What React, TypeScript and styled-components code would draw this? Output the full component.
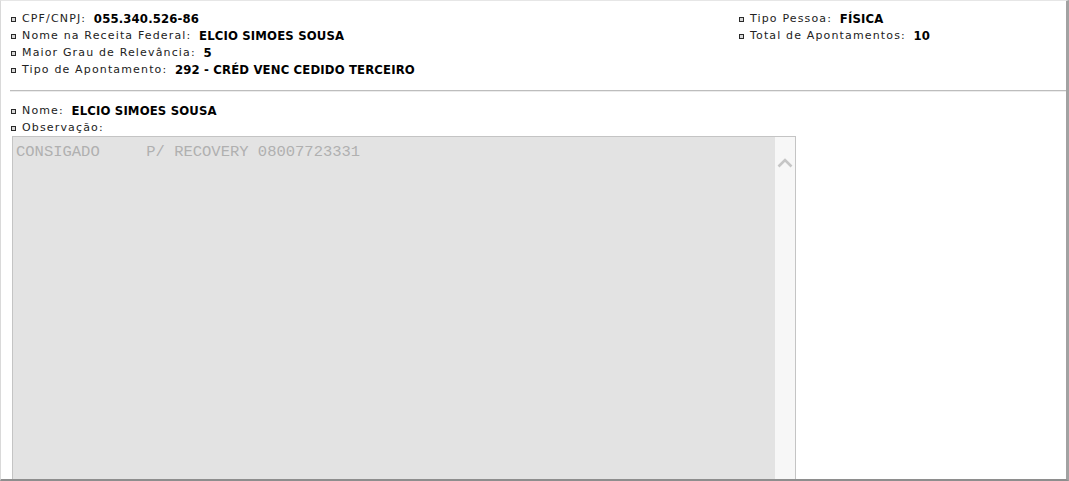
import React from "react";
import styled, { createGlobalStyle } from "styled-components";

const GlobalStyle = createGlobalStyle`
  html, body { margin: 0; padding: 0; background: #ffffff; }
  body { font-family: "DejaVu Sans", Verdana, sans-serif; }
  * { box-sizing: border-box; }
`;

const Page = styled.div`
  height: 481px;
  overflow: hidden;
  background: #ffffff;
  border-top: 1px solid #e6e6e6;
  border-left: 1px solid #d9d9d9;
  border-right: 3px solid #a2a2a2;
  border-bottom: 2px solid #8e8e8e;
`;

const Header = styled.div`
  display: grid;
  grid-template-columns: 728px 1fr;
  padding: 9px 0 0 9px;
`;

const Column = styled.div`
  display: flex;
  flex-direction: column;
`;

const Item = styled.div`
  display: flex;
  align-items: center;
  height: 17px;
  font-size: 11px;
  letter-spacing: 1.15px;
  color: #222222;
  white-space: pre;
`;

const Bullet = styled.span`
  display: inline-block;
  width: 5px;
  height: 5px;
  border: 1px solid #2a2a2a;
  background: #d8d8d8;
  margin: 1px 6px 0 1px;
  flex: none;
`;

const Value = styled.b`
  font-weight: bold;
  font-size: 11.7px;
  letter-spacing: 0.15px;
  margin-left: 3px;
  color: #000000;
`;

const Divider = styled.div`
  margin: 12px 0 0 9px;
  border-top: 1px solid #bdbdbd;
  border-bottom: 1px solid #ececec;
`;

const Body = styled.div`
  display: flex;
  flex-direction: column;
  padding: 10px 0 0 9px;
`;

const ObsBox = styled.div`
  display: flex;
  width: 784px;
  height: 420px;
  margin-left: 2px;
  border: 1px solid #c4c4c4;
`;

const ObsText = styled.div`
  flex: 1;
  background: #e3e3e3;
  padding: 6px 3px;
  font-family: "Liberation Mono", "Courier New", monospace;
  font-size: 15.5px;
  line-height: 18px;
  color: #b0b0b0;
  white-space: pre;
`;

const ScrollTrack = styled.div`
  width: 20px;
  background: #f7f7f7;
  display: flex;
  justify-content: center;
  padding-top: 21px;
`;

const Row: React.FC<{ label: string; value: string }> = ({ label, value }) => (
  <Item>
    <Bullet />
    {label + " "}
    <Value>{value}</Value>
  </Item>
);

export default function App() {
  return (
    <>
      <GlobalStyle />
      <Page>
        <Header>
          <Column>
            <Row label="CPF/CNPJ:" value="055.340.526-86" />
            <Row label="Nome na Receita Federal:" value="ELCIO SIMOES SOUSA" />
            <Row label="Maior Grau de Relevância:" value="5" />
            <Row label="Tipo de Apontamento:" value="292 - CRÉD VENC CEDIDO TERCEIRO" />
          </Column>
          <Column>
            <Row label="Tipo Pessoa:" value="FÍSICA" />
            <Row label="Total de Apontamentos:" value="10" />
          </Column>
        </Header>
        <Divider />
        <Body>
          <Row label="Nome:" value="ELCIO SIMOES SOUSA" />
          <Item>
            <Bullet />
            Observação:
          </Item>
          <ObsBox>
            <ObsText>{"CONSIGADO     P/ RECOVERY 08007723331"}</ObsText>
            <ScrollTrack>
              <svg width="16" height="10" viewBox="0 0 16 10">
                <path d="M1.5 8.5 L8 2 L14.5 8.5" fill="none" stroke="#c6c6c6" strokeWidth="2.6" />
              </svg>
            </ScrollTrack>
          </ObsBox>
        </Body>
      </Page>
    </>
  );
}
